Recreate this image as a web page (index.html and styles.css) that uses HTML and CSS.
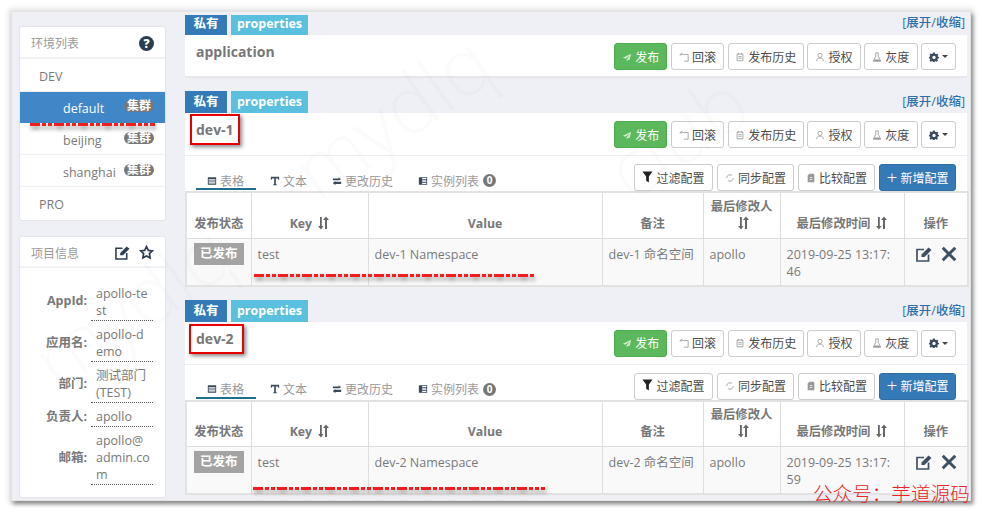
FILE: index.html
```html
<!DOCTYPE html>
<html lang="zh">
<head>
<meta charset="utf-8">
<title>Apollo</title>
<link rel="stylesheet" href="styles.css">
</head>
<body>
<svg class="defs" width="0" height="0">
  <symbol id="i-send" viewBox="0 0 12 12"><path d="M11 2 1 7l3 1.200L9 4.500 5.500 9v2l1.800-1.800 1.700.8z"/></symbol>
  <symbol id="i-back" viewBox="0 0 12 12"><path d="M4 1 1 3.500 4 3.200V3h7v8H6" fill="none" stroke="currentColor" stroke-width="1"/></symbol>
  <symbol id="i-hist" viewBox="0 0 12 12"><path d="M2.500 2.500h7v8h-7zM4 1v2M8 1v2M4 5.500h4M4 7.500h4" fill="none" stroke="currentColor" stroke-width="1"/></symbol>
  <symbol id="i-user" viewBox="0 0 12 12"><circle cx="6" cy="4" r="2.500" fill="none" stroke="currentColor"/><path d="M2 11c0-3 2-3.500 2.500-3.500h3c.5 0 2.500.5 2.500 3.500" fill="none" stroke="currentColor"/></symbol>
  <symbol id="i-flask" viewBox="0 0 12 12"><path d="M4.500 1h3v4l3 6h-9l3-6z" fill="none" stroke="currentColor"/><path d="M3 9h6l1 2H2z"/></symbol>
  <symbol id="i-gear" viewBox="0 0 12 12"><path d="M5 .5h2l.3 1.500 1.300.6 1.300-.8 1.300 1.400-.8 1.300.5 1.300L12 6v1.500l-1.400.3-.6 1.300.8 1.300-1.400 1.300-1.300-.8-1.300.5-.3 1.500H5l-.3-1.500-1.300-.5-1.300.8L.7 10.400l.8-1.300L1 7.800-.2 7.500V6l1.200-.3.500-1.300-.8-1.300L1.900 1.700l1.300.8 1.500-.6zM6 4.500a2 2 0 1 0 0 4 2 2 0 0 0 0-4z" fill-rule="evenodd"/></symbol>
  <symbol id="i-filter" viewBox="0 0 12 12"><path d="M.5 0h11L7.500 5.500V12l-3-2V5.500z"/></symbol>
  <symbol id="i-sync" viewBox="0 0 12 12"><path d="M2 6a4 4 0 0 1 6.500-3M10 6a4 4 0 0 1-6.500 3" fill="none" stroke="currentColor"/></symbol>
  <symbol id="i-comp" viewBox="0 0 12 12"><path d="M4 1h5l1 1v9H2V3zM4.500 5h3v1h-3zM4.500 7.500h3v1h-3z" fill-rule="evenodd"/></symbol>
  <symbol id="i-table" viewBox="0 0 12 12"><path d="M1 1.500h10v9H1zM2 4v1.500h8V4zM2 6.500V8h8V6.500zM2 9v.7h8V9z" fill-rule="evenodd"/></symbol>
  <symbol id="i-text" viewBox="0 0 12 12"><path d="M1 1h10v3.500h-1L9.500 3H7v7l1.500.5V11h-5v-.5L5 10V3H2.500L2 4.500H1z"/></symbol>
  <symbol id="i-swap" viewBox="0 0 12 12"><path d="M1 3h7V1.500L11 4 8 5H1zM11 7H4V6L1 8.500 4 11V9.500h7z"/></symbol>
  <symbol id="i-list" viewBox="0 0 12 12"><path d="M1 1.500h10v9H1zM5 2.500v1.500h5V2.500zM5 5.200v1.600h5V5.200zM5 8v1.500h5V8z" fill-rule="evenodd"/></symbol>
  <symbol id="i-sort" viewBox="0 0 12 14"><path d="M3 1v9H1l3 3.500L6.500 10H4.800V1zM8 13V4H6l3-3.500L12 4h-2v9z"/></symbol>
  <symbol id="i-edit" viewBox="0 0 16 16"><path d="M12.500 8.500V15H1V3.500h7" fill="none" stroke="currentColor" stroke-width="1.700"/><path d="M5.500 8.500 12.500 1.500 15.500 4l-7 7h-3z"/></symbol>
  <symbol id="i-x" viewBox="0 0 14 14"><path d="M1.500 1.500 12.500 12.500M12.500 1.500 1.500 12.500" fill="none" stroke="currentColor" stroke-width="2.600"/></symbol>
  <symbol id="i-star" viewBox="0 0 14 14"><path d="M7 1.500 8.700 5l3.800.5-2.800 2.600.7 3.900L7 10.200 3.600 12l.7-3.900L1.500 5.500 5.300 5z" fill="none" stroke="currentColor" stroke-width="1.600"/></symbol>
</svg>

<div class="window">
  <aside class="side">
    <section class="card">
      <header class="card-head"><span>环境列表</span><span class="help">?</span></header>
      <ul class="env">
        <li class="env-row">DEV</li>
        <li class="env-row sub active"><span>default</span><b class="badge">集群</b></li>
        <li class="env-row sub"><span>beijing</span><b class="badge">集群</b></li>
        <li class="env-row sub"><span>shanghai</span><b class="badge">集群</b></li>
        <li class="env-row">PRO</li>
      </ul>
    </section>
    <section class="card">
      <header class="card-head low"><span>项目信息</span><span class="head-icons"><svg class="ic16"><use href="#i-edit"/></svg><svg class="ic16"><use href="#i-star"/></svg></span></header>
      <dl class="info">
        <dt>AppId:</dt><dd>apollo-te<br>st</dd>
        <dt>应用名:</dt><dd>apollo-d<br>emo</dd>
        <dt>部门:</dt><dd>测试部门<br>(TEST)</dd>
        <dt>负责人:</dt><dd>apollo</dd>
        <dt>邮箱:</dt><dd>apollo@<br>admin.co<br>m</dd>
      </dl>
    </section>
  </aside>

  <main class="main">
    <section class="ns first">
      <div class="tags"><span class="tag t-blue">私有</span><span class="tag t-cyan">properties</span><a class="fold">[展开/收缩]</a></div>
      <div class="ns-head tall">
        <h3>application</h3>
        <div class="actions">
          <button class="btn green"><svg class="ic"><use href="#i-send"/></svg>发布</button>
          <button class="btn w53"><svg class="ic"><use href="#i-back"/></svg>回滚</button>
          <button class="btn w76"><svg class="ic"><use href="#i-hist"/></svg>发布历史</button>
          <button class="btn w53"><svg class="ic"><use href="#i-user"/></svg>授权</button>
          <button class="btn w53"><svg class="ic"><use href="#i-flask"/></svg>灰度</button>
          <button class="btn gear"><svg class="ic dark"><use href="#i-gear"/></svg><i class="caret"></i></button>
        </div>
      </div>
    </section>

    <section class="ns">
      <div class="tags"><span class="tag t-blue">私有</span><span class="tag t-cyan">properties</span><a class="fold">[展开/收缩]</a></div>
      <div class="ns-head">
        <h3>dev-1</h3>
        <div class="actions">
          <button class="btn green"><svg class="ic"><use href="#i-send"/></svg>发布</button>
          <button class="btn w53"><svg class="ic"><use href="#i-back"/></svg>回滚</button>
          <button class="btn w76"><svg class="ic"><use href="#i-hist"/></svg>发布历史</button>
          <button class="btn w53"><svg class="ic"><use href="#i-user"/></svg>授权</button>
          <button class="btn w53"><svg class="ic"><use href="#i-flask"/></svg>灰度</button>
          <button class="btn gear"><svg class="ic dark"><use href="#i-gear"/></svg><i class="caret"></i></button>
        </div>
      </div>
      <div class="tabbar">
        <nav class="tabs">
          <a class="tab on"><svg class="ic dark"><use href="#i-table"/></svg>表格</a>
          <a class="tab near"><svg class="ic dark"><use href="#i-text"/></svg>文本</a>
          <a class="tab"><svg class="ic dark"><use href="#i-swap"/></svg>更改历史</a>
          <a class="tab"><svg class="ic dark"><use href="#i-list"/></svg>实例列表<b class="count">0</b></a>
        </nav>
        <div class="actions wide">
          <button class="btn w79"><svg class="ic blk"><use href="#i-filter"/></svg>过滤配置</button>
          <button class="btn w77"><svg class="ic"><use href="#i-sync"/></svg>同步配置</button>
          <button class="btn w77"><svg class="ic"><use href="#i-comp"/></svg>比较配置</button>
          <button class="btn blue w77"><span class="plus">+</span>新增配置</button>
        </div>
      </div>
      <table class="grid">
        <colgroup><col class="c1"><col class="c2"><col class="c3"><col class="c4"><col class="c5"><col class="c6"><col class="c7"></colgroup>
        <thead><tr>
          <th>发布状态</th>
          <th>Key <svg class="sort"><use href="#i-sort"/></svg></th>
          <th>Value</th>
          <th>备注</th>
          <th>最后修改人 <svg class="sort"><use href="#i-sort"/></svg></th>
          <th>最后修改时间 <svg class="sort"><use href="#i-sort"/></svg></th>
          <th>操作</th>
        </tr></thead>
        <tbody><tr>
          <td><span class="state">已发布</span></td>
          <td>test</td>
          <td>dev-1 Namespace</td>
          <td>dev-1 命名空间</td>
          <td>apollo</td>
          <td class="time">2019-09-25 13:17:<br>46</td>
          <td class="ops"><svg class="op"><use href="#i-edit"/></svg><svg class="op"><use href="#i-x"/></svg></td>
        </tr></tbody>
      </table>
    </section>

    <section class="ns">
      <div class="tags"><span class="tag t-blue">私有</span><span class="tag t-cyan">properties</span><a class="fold">[展开/收缩]</a></div>
      <div class="ns-head">
        <h3>dev-2</h3>
        <div class="actions">
          <button class="btn green"><svg class="ic"><use href="#i-send"/></svg>发布</button>
          <button class="btn w53"><svg class="ic"><use href="#i-back"/></svg>回滚</button>
          <button class="btn w76"><svg class="ic"><use href="#i-hist"/></svg>发布历史</button>
          <button class="btn w53"><svg class="ic"><use href="#i-user"/></svg>授权</button>
          <button class="btn w53"><svg class="ic"><use href="#i-flask"/></svg>灰度</button>
          <button class="btn gear"><svg class="ic dark"><use href="#i-gear"/></svg><i class="caret"></i></button>
        </div>
      </div>
      <div class="tabbar">
        <nav class="tabs">
          <a class="tab on"><svg class="ic dark"><use href="#i-table"/></svg>表格</a>
          <a class="tab near"><svg class="ic dark"><use href="#i-text"/></svg>文本</a>
          <a class="tab"><svg class="ic dark"><use href="#i-swap"/></svg>更改历史</a>
          <a class="tab"><svg class="ic dark"><use href="#i-list"/></svg>实例列表<b class="count">0</b></a>
        </nav>
        <div class="actions wide">
          <button class="btn w79"><svg class="ic blk"><use href="#i-filter"/></svg>过滤配置</button>
          <button class="btn w77"><svg class="ic"><use href="#i-sync"/></svg>同步配置</button>
          <button class="btn w77"><svg class="ic"><use href="#i-comp"/></svg>比较配置</button>
          <button class="btn blue w77"><span class="plus">+</span>新增配置</button>
        </div>
      </div>
      <table class="grid">
        <colgroup><col class="c1"><col class="c2"><col class="c3"><col class="c4"><col class="c5"><col class="c6"><col class="c7"></colgroup>
        <thead><tr>
          <th>发布状态</th>
          <th>Key <svg class="sort"><use href="#i-sort"/></svg></th>
          <th>Value</th>
          <th>备注</th>
          <th>最后修改人 <svg class="sort"><use href="#i-sort"/></svg></th>
          <th>最后修改时间 <svg class="sort"><use href="#i-sort"/></svg></th>
          <th>操作</th>
        </tr></thead>
        <tbody><tr>
          <td><span class="state">已发布</span></td>
          <td>test</td>
          <td>dev-2 Namespace</td>
          <td>dev-2 命名空间</td>
          <td>apollo</td>
          <td class="time">2019-09-25 13:17:<br>59</td>
          <td class="ops"><svg class="op"><use href="#i-edit"/></svg><svg class="op"><use href="#i-x"/></svg></td>
        </tr></tbody>
      </table>
    </section>
  </main>
</div>

<div class="mark m1">mydlq</div>
<div class="mark m2">club</div>
<div class="mark m3">mydlq</div>
<i class="box b1"></i>
<i class="box b2"></i>
<svg class="scribble" width="982" height="513">
  <path d="M30 124.500H155M254 275.500H536M253 488.500H545"/>
</svg>
<div class="stamp">公众号：芋道源码</div>
</body>
</html>
```

FILE: styles.css
```css
* { box-sizing: border-box; }
html, body { margin: 0; padding: 0; }
body {
  width: 982px; height: 513px; overflow: hidden; position: relative; background: #fff;
  font-family: "Open Sans", "Noto Sans CJK SC", sans-serif;
  font-size: 12.5px; color: #797979;
}
.defs { position: absolute; }

.window {
  position: absolute; left: 12px; top: 12px; width: 958px; height: 488px;
  background: #eff0f6; display: flex; gap: 20px; padding: 3px 3px 0 8px; overflow: hidden;
  outline: 1px solid #e3e3e3;
}
body::before {
  content: ""; position: absolute; left: 12px; top: 12px; width: 958px; height: 488px;
  box-shadow: 2px 3px 4px 1px #8a8a8a, 0 0 5px 4px #e8e8e8;
}

.side { width: 145px; flex: none; padding-top: 12px; display: flex; flex-direction: column; gap: 17px; }
.card { background: #fff; box-shadow: 0 0 2px #c8c8d0; border-radius: 2px; }
.card-head {
  height: 32px; display: flex; align-items: center; justify-content: space-between;
  padding: 2px 11px 0; border-bottom: 2px solid #f1f1f6; font-size: 12px; color: #9a9a9a;
}
.card-head.low { height: 31px; padding-top: 2px; }
.help {
  width: 15px; height: 15px; border-radius: 50%; background: #2c3e50; color: #fff;
  font-weight: 800; font-size: 12px; line-height: 15px; text-align: center;
}
.head-icons { display: flex; gap: 9px; color: #2f3f52; fill: #2f3f52; }
.ic16 { width: 15px; height: 15px; }
.env { list-style: none; margin: 0; padding: 0; }
.env-row {
  height: 32px; line-height: 30px; padding: 3px 11px 0 19px;
  display: flex; justify-content: space-between; border-bottom: 1px solid #f1f1f5;
}
.env-row:first-child { height: 33px; }
.env-row:last-child { height: 33px; border-bottom: 0; }
.env-row.sub { padding-left: 43px; }
.env-row.active { background: #3f87c7; color: #fff; height: 31px; line-height: 30px; border: 0; padding-top: 2px; }
.badge {
  background: #777; color: #fff; font-size: 12px; font-weight: 700; line-height: 12px; height: 12px;
  border-radius: 6px; padding: 0 3px; margin-top: 6px;
}
.info {
  display: grid; grid-template-columns: 67px 62px; margin: 0; padding: 12px 12px 12px 0;
  width: 145px;
}
.info dt { font-weight: 700; text-align: right; align-self: center; font-size: 12.5px; }
.info dd {
  margin: 0 0 0 4px; padding: 5px 1px 1px 5px; border-bottom: 1px dotted #555; line-height: 17px;
  width: 62px; font-size: 12.5px; white-space: nowrap;
}

.main { flex: 1; min-width: 0; display: flex; flex-direction: column; gap: 13px; }
.tags { display: flex; height: 22px; gap: 4px; align-items: stretch; }
.first .tags { height: 20px; }
.tag {
  color: #fff; font-weight: 700; font-size: 12.5px; display: flex; align-items: flex-start; justify-content: center;
  line-height: 21px;
}
.first .tag { line-height: 17px; }
.t-blue { width: 42px; background: #337ab7; }
.t-cyan { width: 77px; background: #5bc0de; }
.fold { margin-left: auto; color: #2f6fa8; font-size: 12.5px; line-height: 22px; margin-right: 2px; font-weight: 500; }
.first .fold { line-height: 16px; }
.ns-head {
  background: #fff; height: 43px; display: flex; justify-content: space-between; align-items: flex-start;
  padding: 8px 11px 0 11px; border-bottom: 1px solid #eeeef4;
}
.ns-head.tall { border-bottom: 2px solid #e6e6ec; }
.ns-head h3 { margin: 0; font-size: 14px; line-height: 18px; font-weight: 700; color: #777; }
.actions { display: flex; gap: 3.500px; }
.actions.wide { gap: 4px; }
.btn {
  height: 27px; padding: 0 4px; border: 1px solid #ccc; border-radius: 3px; background: #fff;
  font: inherit; font-size: 12px; color: #4c4c4c; display: flex; align-items: center; justify-content: center; gap: 3px;
  white-space: nowrap;
}
.btn.green { width: 53px; background: #5cb85c; border-color: #4cae4c; color: #fff; }
.btn.blue { background: #337ab7; border-color: #2e6da4; color: #fff; }
.w53 { width: 53.400px; }
.w76 { width: 76px; }
.w79 { width: 79px; }
.w77 { width: 77px; }
.gear { width: 35px; gap: 3px; }
.ic { width: 10px; height: 10px; flex: none; color: #999; fill: #999; }
.green .ic { color: #cfeccf; fill: #cfeccf; }
.ic.dark { color: #3a4a5c; fill: #3a4a5c; }
.ic.blk { color: #222; fill: #222; width: 11px; height: 12px; margin-top: -2px; }
.caret { width: 0; height: 0; border: 3.500px solid transparent; border-top-color: #444; border-bottom: 0; }
.plus { font-size: 19px; line-height: 1; font-weight: 300; margin-top: -1px; }
.tabbar {
  background: #fff; height: 35px; display: flex; justify-content: space-between; align-items: flex-end;
  padding: 0 11px;
}
.tabs { display: flex; align-items: flex-end; }
.tab {
  display: flex; align-items: center; gap: 3px; height: 19px; padding-top: 2px; font-size: 12px; color: #999;
  border-bottom: 2px solid transparent; margin-bottom: 1px; margin-left: 25px;
}
.tab.on { width: 60px; margin-left: 0; padding-left: 11px; border-bottom-color: #1d6f8c; }
.tab.near { margin-left: 14px; }
.count {
  width: 13px; height: 13px; border-radius: 50%; background: #777; color: #fff; font-size: 10px;
  line-height: 13px; text-align: center; margin-left: 1px;
}
.grid { width: 782px; border-collapse: collapse; table-layout: fixed; background: #fff; border: 2px solid #e2e2e2; }
.c1 { width: 65px; } .c2 { width: 117px; } .c3 { width: 234px; } .c4 { width: 101px; }
.c5 { width: 77px; } .c6 { width: 124px; } .c7 { width: 64px; }
.grid th, .grid td { border: 1px solid #ddd; vertical-align: top; line-height: 17px; }
.grid th { height: 46px; vertical-align: bottom; text-align: center; font-size: 12.300px; font-weight: 700; color: #777; padding: 4px 6px 6px; }
.grid td { height: 46px; background: #f9f9f9; padding: 7px 6px 5px; font-size: 12.5px; }
.grid td:first-child { text-align: center; padding: 4px 0 0; }
.grid td.time { white-space: nowrap; }
.sort { width: 12px; height: 14px; fill: #666; vertical-align: -2px; margin-left: 2px; }
.state {
  display: inline-block; background: #a3a3a3; color: #fff; font-weight: 700; width: 50px; height: 22px; line-height: 22px; font-size: 12.5px;
}
.grid td.ops { white-space: nowrap; padding: 7px 0 0 11px; }
.op { width: 16px; height: 16px; color: #3f4f62; fill: #3f4f62; margin-right: 9px; vertical-align: top; }

.box { position: absolute; border: 2px solid #e60000; box-shadow: 2px 2px 4px #888; }
.b1 { left: 190px; top: 114px; width: 50px; height: 31px; }
.b2 { left: 189px; top: 324px; width: 55px; height: 30px; }
.scribble { position: absolute; left: 0; top: 0; pointer-events: none; }
.scribble path {
  fill: none; stroke: #f41c1c; stroke-width: 3px; stroke-dasharray: 10 2 4 2 4 2;
  filter: drop-shadow(1px 3px 2px #888);
}
.stamp {
  position: absolute; left: 813px; top: 482px; color: #e92222; font-size: 19.600px; line-height: 22px;
  font-family: "Noto Sans CJK SC", sans-serif; font-weight: 300; white-space: nowrap;
}
.mark {
  position: absolute; color: rgba(120, 120, 160, .03); font-size: 80px; font-weight: 300; transform: rotate(-35deg);
  pointer-events: none; white-space: nowrap;
}
.m1 { left: 20px; top: 250px; }
.m2 { left: 600px; top: 80px; }
.m3 { left: 280px; top: 60px; }
```
